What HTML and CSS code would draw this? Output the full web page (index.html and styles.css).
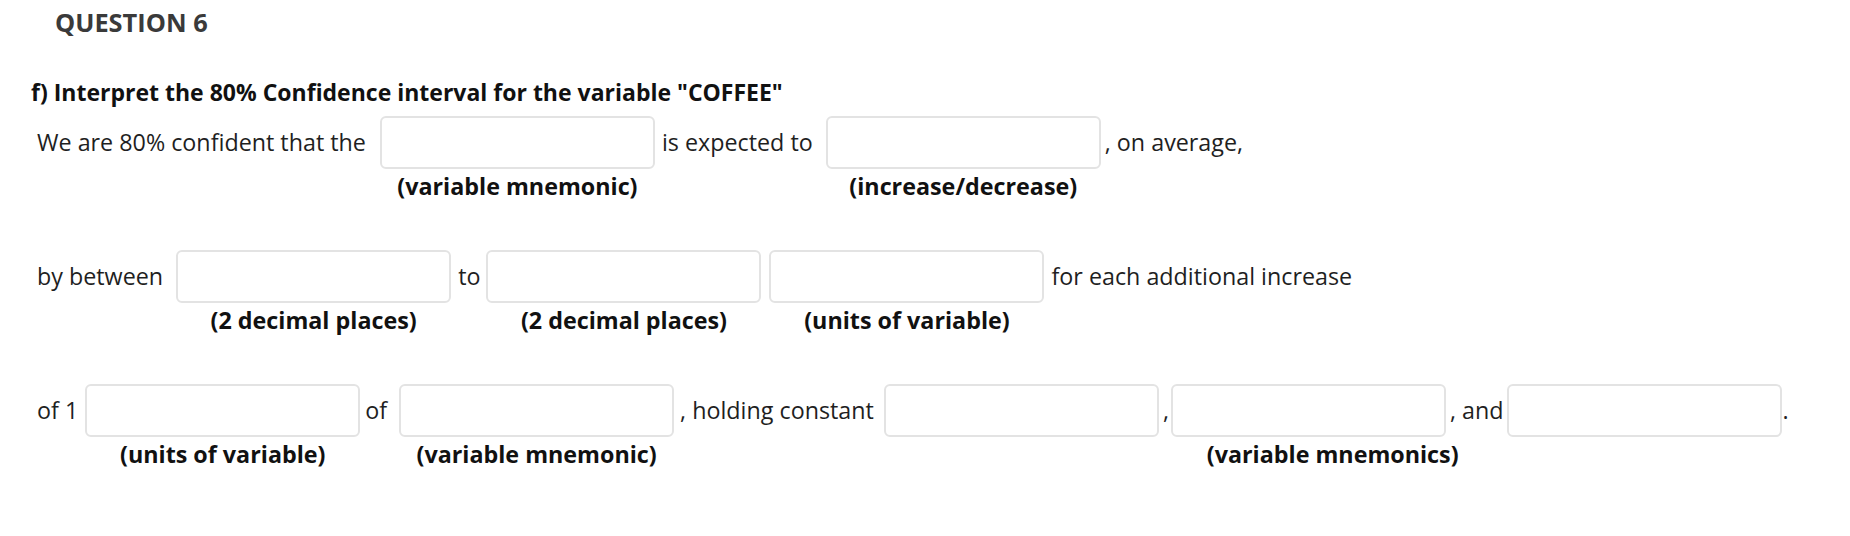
FILE: index.html
```html
<!DOCTYPE html>
<html lang="en">
<head>
<meta charset="utf-8">
<title>Question 6</title>
<link rel="stylesheet" href="styles.css">
</head>
<body>
<div class="page">
  <h2 class="qhead">QUESTION 6</h2>
  <div class="question">
    <p class="prompt">f) Interpret the 80% Confidence interval for the variable "COFFEE"</p>
    <div class="answer">
      <div class="row">
        <span class="txt pr10">We are 80% confident that the</span>
        <div class="field"><input class="box" type="text"><span class="label">(variable mnemonic)</span></div>
        <span class="txt pl3 pr9">is expected to</span>
        <div class="field"><input class="box" type="text"><span class="label">(increase/decrease)</span></div>
        <span class="txt">, on average,</span>
      </div>
      <div class="row">
        <span class="txt pr9">by between</span>
        <div class="field"><input class="box" type="text"><span class="label">(2 decimal places)</span></div>
        <span class="txt pl3 pr2">to</span>
        <div class="field"><input class="box" type="text"><span class="label">(2 decimal places)</span></div>
        <div class="field"><input class="box" type="text"><span class="label">(units of variable)</span></div>
        <span class="txt pl3">for each additional increase</span>
      </div>
      <div class="row">
        <span class="txt pr3">of 1</span>
        <div class="field"><input class="box" type="text"><span class="label">(units of variable)</span></div>
        <span class="txt pl1 pr8">of</span>
        <div class="field"><input class="box" type="text"><span class="label">(variable mnemonic)</span></div>
        <span class="txt pl2 pr6">, holding constant</span>
        <div class="group">
          <div class="group-boxes">
            <input class="box gbox" type="text">
            <span class="txt pr2">,</span>
            <input class="box gbox" type="text">
            <span class="txt pr3">, and</span>
            <input class="box gbox" type="text">
          </div>
          <span class="label">(variable mnemonics)</span>
        </div>
        <span class="txt">.</span>
      </div>
    </div>
  </div>
</div>
</body>
</html>
```
FILE: styles.css
```css
html, body {
  margin: 0;
  padding: 0;
  background: #ffffff;
}

body {
  font-family: "Open Sans", "Liberation Sans", sans-serif;
  color: #1f1f1f;
}

.page {
  padding-top: 6px;
}

.qhead {
  margin: 0 0 0 55px;
  font-size: 25.4px;
  line-height: 32px;
  font-weight: 700;
  color: #3a3a3a;
}

.prompt {
  margin: 40px 0 0 31px;
  font-size: 23px;
  line-height: 29px;
  font-weight: 700;
  color: #111111;
}

.answer {
  margin: 9px 0 0 37px;
  display: flex;
  flex-direction: column;
  gap: 49px;
}

.row {
  display: flex;
  align-items: flex-start;
}

.txt {
  font-size: 23.3px;
  line-height: 52px;
  height: 52px;
  white-space: pre;
  color: #1f1f1f;
}

.pl1 { padding-left: 1px; }
.pl2 { padding-left: 2px; }
.pl3 { padding-left: 3px; }
.pr2 { padding-right: 2px; }
.pr3 { padding-right: 3px; }
.pr6 { padding-right: 6px; }
.pr8 { padding-right: 8px; }
.pr9 { padding-right: 9px; }
.pr10 { padding-right: 10px; }

.field {
  display: flex;
  flex-direction: column;
  align-items: center;
  margin: 0 4px;
}

.box {
  box-sizing: border-box;
  width: 275px;
  height: 53px;
  margin: 0;
  padding: 0 10px;
  border: 2px solid #e3e3e3;
  border-radius: 6px;
  background: #ffffff;
  font-family: inherit;
  font-size: 21px;
  outline: none;
}

.label {
  margin-top: 3px;
  font-size: 23.3px;
  line-height: 29px;
  font-weight: 700;
  color: #111111;
  white-space: nowrap;
}

.group {
  display: flex;
  flex-direction: column;
  align-items: center;
  margin: 0 1px 0 4px;
}

.group-boxes {
  display: flex;
  align-items: flex-start;
}

.gbox {
  margin-right: 4px;
}

.gbox:last-child {
  margin-right: 0;
}
```
